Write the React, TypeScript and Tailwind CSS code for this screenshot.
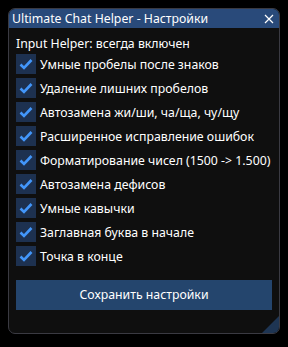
import React from "react";

const items = [
  "Умные пробелы после знаков",
  "Удаление лишних пробелов",
  "Автозамена жи/ши, ча/ща, чу/щу",
  "Расширенное исправление ошибок",
  "Форматирование чисел (1500 -> 1.500)",
  "Автозамена дефисов",
  "Умные кавычки",
  "Заглавная буква в начале",
  "Точка в конце",
];

function Check() {
  return (
    <div className="w-5 h-5 bg-[#1d3150] flex items-center justify-center shrink-0">
      <svg width="20" height="20" viewBox="0 0 20 20">
        <polyline
          points="4.5,10.5 8,14 15.5,6"
          fill="none"
          stroke="#4296fa"
          strokeWidth="2.6"
        />
      </svg>
    </div>
  );
}

export default function App() {
  return (
    <div className="w-[288px] h-[347px] bg-black pt-2 pl-2" style={{ fontFamily: '"Noto Sans", "DejaVu Sans", sans-serif' }}>
      <div className="relative w-[272px] h-[326px] bg-[#0f0f0f] rounded-[7px] border border-[#3a3a42] overflow-hidden flex flex-col text-white text-[12.3px]">
        <div className="h-[19px] bg-[#294a7a] flex items-center justify-between pl-[3px] pr-[5px] leading-[14px]">
          <span>Ultimate Chat Helper - Настройки</span>
          <svg width="10" height="10" viewBox="0 0 10 10">
            <path d="M1 1 L9 9 M9 1 L1 9" stroke="#ffffff" strokeWidth="1.2" />
          </svg>
        </div>
        <div className="flex flex-col gap-1 px-[7px] pt-2">
          <div className="h-[14px] leading-[14px] pt-[1px]">Input Helper: всегда включен</div>
          {items.map((t) => (
            <div key={t} className="h-5 flex items-center gap-1">
              <Check />
              <span className="leading-[14px] pt-[2px]">{t}</span>
            </div>
          ))}
          <button className="mt-[10px] h-[30px] w-[256px] bg-[#24456d] text-white text-[12.3px] flex items-center justify-center">
            Сохранить настройки
          </button>
        </div>
        <svg className="absolute right-0 bottom-0" width="17" height="17" viewBox="0 0 17 17">
          <polygon points="17,0 17,17 0,17" fill="#1e3553" />
        </svg>
      </div>
    </div>
  );
}
